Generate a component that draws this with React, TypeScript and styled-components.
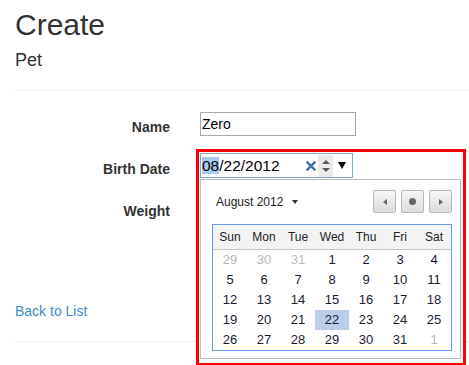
import React from 'react';
import styled, { createGlobalStyle } from 'styled-components';

const GlobalStyle = createGlobalStyle`
  html, body {
    height: 100%;
  }
  body {
    margin: 0;
    background: #fff;
    font-family: "Liberation Sans", Arial, sans-serif;
    color: #333;
    overflow: hidden;
  }
  * {
    box-sizing: border-box;
  }
`;

const Page = styled.div`
  min-height: 365px;
  padding: 8px 0 0 15px;
`;

const Title = styled.h1`
  margin: 0;
  font-size: 30px;
  font-weight: normal;
  line-height: 33px;
`;

const Subtitle = styled.h4`
  margin: 9px 0 0;
  font-size: 18px;
  font-weight: normal;
  line-height: 20px;
`;

const Rule = styled.hr<{ $top: number }>`
  margin: ${(p) => p.$top}px 0 0;
  height: 0;
  border: 0;
  border-top: 1px solid #eee;
`;

const Form = styled.form`
  margin: 20px 0 64px;
`;

const Row = styled.div`
  display: flex;
  align-items: flex-start;
  height: 42px;
`;

const Label = styled.label`
  width: 155px;
  margin-right: 30px;
  padding-top: 6px;
  text-align: right;
  font-size: 14px;
  font-weight: bold;
  line-height: 20px;
`;

const TextInput = styled.input`
  width: 156px;
  height: 24px;
  margin: 1px 0 0;
  padding: 0 1px;
  border: 1px solid #a9a9a9;
  font-family: "Liberation Sans", Arial, sans-serif;
  font-size: 14px;
  color: #000;
  outline: none;
`;

const BackLink = styled.a`
  display: block;
  font-size: 14px;
  line-height: 20px;
  color: #428bca;
  text-decoration: none;
`;

/* date picker */

const DateField = styled.div`
  position: relative;
  width: 153px;
  height: 25px;
`;

const Frame = styled.div`
  position: absolute;
  top: -4px;
  left: -4px;
  z-index: 5;
  padding: 1px 2px 4px 1px;
  border: 3px solid #f00;
  background: #fff;
`;

const DateBox = styled.div`
  display: flex;
  align-items: center;
  width: 153px;
  height: 25px;
  padding: 0 6px 0 1px;
  border: 1px solid #7ea6dc;
  font-size: 15.5px;
  color: #000;
`;

const Segment = styled.span<{ $selected?: boolean }>`
  line-height: 17px;
  background: ${(p) => (p.$selected ? '#a9cbf3' : 'transparent')};
`;

const Spacer = styled.span`
  flex: 1;
`;

const ClearIcon = styled.svg`
  width: 10px;
  height: 10px;
  margin-right: 2px;
`;

const Spinner = styled.span`
  display: flex;
  flex-direction: column;
  align-items: center;
  justify-content: center;
  gap: 4px;
  width: 15px;
  height: 22px;
  margin-right: 5px;
  background: #ebebeb;
`;

const Arrow = styled.span<{ $dir: 'up' | 'down' }>`
  width: 0;
  height: 0;
  border-left: 4px solid transparent;
  border-right: 4px solid transparent;
  ${(p) => (p.$dir === 'up' ? 'border-bottom' : 'border-top')}: 4px solid #5a5a5a;
`;

const DropArrow = styled.span`
  width: 0;
  height: 0;
  border-left: 4px solid transparent;
  border-right: 4px solid transparent;
  border-top: 7px solid #000;
`;

const Popup = styled.div`
  width: 261px;
  margin-top: 1px;
  padding: 10px 8px 7px 11px;
  border: 1px solid #bdbdbd;
  background: #fff;
`;

const PopupHeader = styled.div`
  display: flex;
  align-items: center;
  justify-content: space-between;
  height: 23px;
  margin-bottom: 11px;
`;

const MonthToggle = styled.span`
  display: flex;
  align-items: center;
  padding-left: 4px;
  font-size: 12px;
  color: #222;
`;

const Caret = styled.span`
  width: 0;
  height: 0;
  margin-left: 9px;
  border-left: 3px solid transparent;
  border-right: 3px solid transparent;
  border-top: 4px solid #333;
`;

const NavGroup = styled.div`
  display: flex;
  gap: 5px;
`;

const NavButton = styled.span`
  display: flex;
  align-items: center;
  justify-content: center;
  width: 23px;
  height: 23px;
  border: 1px solid #b8b8b8;
  border-radius: 2px;
  background: linear-gradient(#f6f6f6, #dcdcdc);
`;

const NavTriangle = styled.span<{ $dir: 'left' | 'right' }>`
  width: 0;
  height: 0;
  border-top: 3px solid transparent;
  border-bottom: 3px solid transparent;
  ${(p) => (p.$dir === 'left' ? 'border-right' : 'border-left')}: 4px solid #666;
`;

const NavDot = styled.span`
  width: 7px;
  height: 7px;
  border-radius: 50%;
  background: #666;
`;

const Calendar = styled.table`
  width: 240px;
  border: 1px solid #6a9de6;
  border-spacing: 0;
  table-layout: fixed;
`;

const HeadCell = styled.th`
  height: 25px;
  padding: 0;
  border-bottom: 1px solid #c6c6c6;
  background: #f3f3f3;
  font-size: 12px;
  font-weight: normal;
  color: #222;
`;

const DayCell = styled.td<{ $muted?: boolean; $selected?: boolean }>`
  height: 20px;
  padding: 0;
  text-align: center;
  font-size: 13px;
  line-height: 20px;
  color: ${(p) => (p.$muted ? '#b8b8b8' : '#1b1b30')};
  background: ${(p) => (p.$selected ? '#bccde9' : 'transparent')};
`;

const weekdays = ['Sun', 'Mon', 'Tue', 'Wed', 'Thu', 'Fri', 'Sat'];

type Day = { n: number; muted?: boolean };

const weeks: Day[][] = [
  [{ n: 29, muted: true }, { n: 30, muted: true }, { n: 31, muted: true }, { n: 1 }, { n: 2 }, { n: 3 }, { n: 4 }],
  [5, 6, 7, 8, 9, 10, 11].map((n) => ({ n })),
  [12, 13, 14, 15, 16, 17, 18].map((n) => ({ n })),
  [19, 20, 21, 22, 23, 24, 25].map((n) => ({ n })),
  [{ n: 26 }, { n: 27 }, { n: 28 }, { n: 29 }, { n: 30 }, { n: 31 }, { n: 1, muted: true }],
];

const DatePicker = () => (
  <DateField>
    <Frame>
      <DateBox>
        <Segment $selected>08</Segment>
        <Segment>/22/2012</Segment>
        <Spacer />
        <ClearIcon viewBox="0 0 10 10">
          <path d="M1.5 1.5 L8.5 8.5 M8.5 1.5 L1.5 8.5" stroke="#3c6bb5" strokeWidth="2.4" strokeLinecap="square" />
        </ClearIcon>
        <Spinner>
          <Arrow $dir="up" />
          <Arrow $dir="down" />
        </Spinner>
        <DropArrow />
      </DateBox>

      <Popup>
        <PopupHeader>
          <MonthToggle>
            August 2012
            <Caret />
          </MonthToggle>
          <NavGroup>
            <NavButton>
              <NavTriangle $dir="left" />
            </NavButton>
            <NavButton>
              <NavDot />
            </NavButton>
            <NavButton>
              <NavTriangle $dir="right" />
            </NavButton>
          </NavGroup>
        </PopupHeader>

        <Calendar>
          <thead>
            <tr>
              {weekdays.map((d) => (
                <HeadCell key={d}>{d}</HeadCell>
              ))}
            </tr>
          </thead>
          <tbody>
            {weeks.map((week, i) => (
              <tr key={i}>
                {week.map((day, j) => (
                  <DayCell key={j} $muted={day.muted} $selected={!day.muted && day.n === 22}>
                    {day.n}
                  </DayCell>
                ))}
              </tr>
            ))}
          </tbody>
        </Calendar>
      </Popup>
    </Frame>
  </DateField>
);

const App = () => (
  <Page>
    <GlobalStyle />
    <Title>Create</Title>
    <Subtitle>Pet</Subtitle>
    <Rule $top={20} />

    <Form>
      <Row>
        <Label>Name</Label>
        <TextInput defaultValue="Zero" />
      </Row>
      <Row>
        <Label>Birth Date</Label>
        <DatePicker />
      </Row>
      <Row>
        <Label>Weight</Label>
        <TextInput />
      </Row>
    </Form>

    <BackLink href="#">Back to List</BackLink>
    <Rule $top={20} />
  </Page>
);

export default App;
